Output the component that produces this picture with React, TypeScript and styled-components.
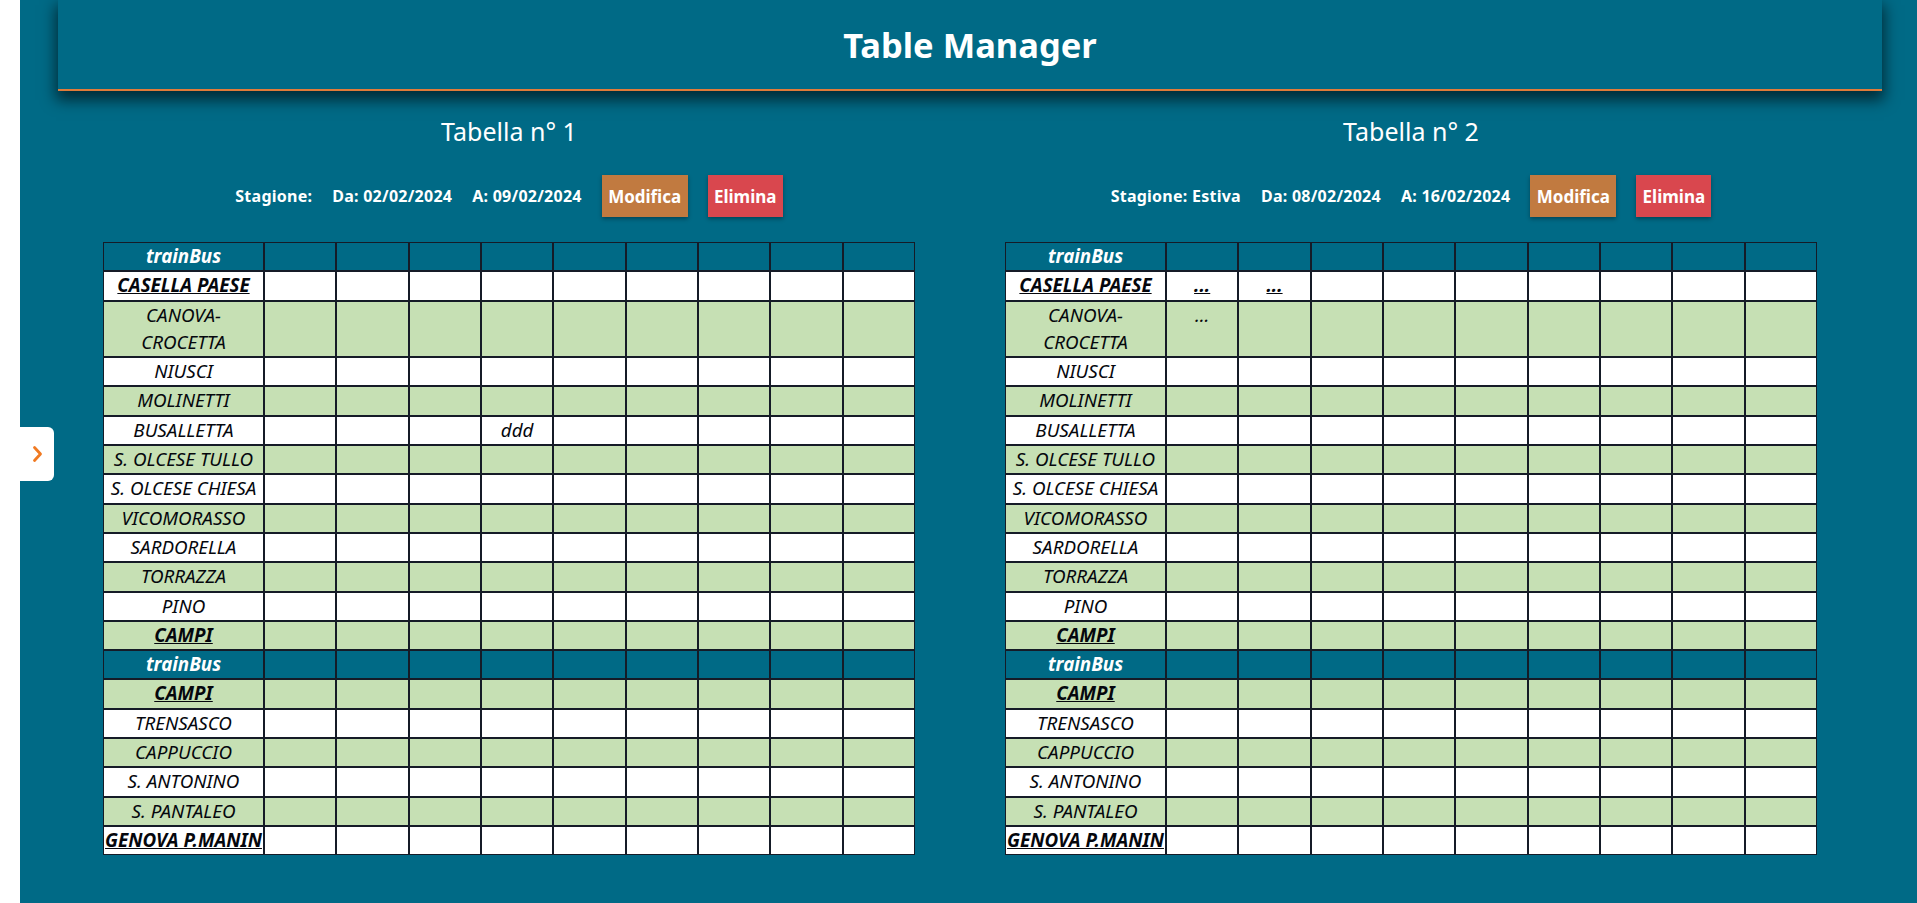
import React from "react";
import styled, { createGlobalStyle, css } from "styled-components";

const TEAL = "#006a86";
const GREEN = "#c6e0b4";
const LINE = "#151b27";

const GlobalStyle = createGlobalStyle`
  html, body {
    margin: 0;
    padding: 0;
    background: ${TEAL};
    font-family: "Noto Sans", "Open Sans", sans-serif;
  }
  * { box-sizing: border-box; }
`;

const Page = styled.div`
  display: flex;
  min-height: 100vh;
  background: ${TEAL};
`;

const Sidebar = styled.aside`
  position: relative;
  flex: 0 0 20px;
  background: #ffffff;
`;

const SidebarToggle = styled.button`
  position: absolute;
  top: 427px;
  left: 19px;
  width: 35px;
  height: 54px;
  padding: 0;
  border: none;
  border-radius: 0 6px 6px 0;
  background: #ffffff;
  display: flex;
  align-items: center;
  justify-content: center;
  cursor: pointer;
  z-index: 2;
`;

const Main = styled.main`
  flex: 1;
  padding: 0 35px 40px 38px;
`;

const Header = styled.header`
  height: 91px;
  border-bottom: 2px solid #e07b39;
  background: ${TEAL};
  box-shadow: 0 7px 14px 2px rgba(0, 0, 0, 0.6);
  display: flex;
  align-items: center;
  justify-content: center;
`;

const Title = styled.h1`
  margin: 0;
  color: #ffffff;
  font-size: 34.5px;
  line-height: 89px;
  font-weight: 700;
`;

const Boards = styled.div`
  display: grid;
  grid-template-columns: repeat(2, 902px);
`;

const Board = styled.section`
  display: flex;
  flex-direction: column;
  align-items: center;
`;

const BoardTitle = styled.h2`
  margin: 23px 0 0;
  color: #ffffff;
  font-size: 25px;
  line-height: 34px;
  font-weight: 400;
`;

const MetaBar = styled.div`
  margin-top: 27px;
  display: flex;
  align-items: center;
  gap: 20px;
  height: 42px;
`;

const MetaItem = styled.span`
  color: #ffffff;
  font-size: 16px;
  letter-spacing: 0.25px;
  font-weight: 700;
  white-space: nowrap;
`;

const ActionButton = styled.button<{ $variant: "edit" | "delete" }>`
  width: ${(p) => (p.$variant === "edit" ? "86px" : "75px")};
  height: 42px;
  padding: 0;
  border: none;
  border-radius: 0;
  color: #ffffff;
  font-family: inherit;
  font-size: 17px;
  font-weight: 700;
  cursor: pointer;
  box-shadow: 0 2px 4px rgba(0, 0, 0, 0.35);
  background: ${(p) => (p.$variant === "edit" ? "#c17a40" : "#d9474e")};
`;

const Timetable = styled.table`
  margin-top: 25px;
  width: 812px;
  border-collapse: separate;
  border-spacing: 0;
  table-layout: fixed;
`;

const StopCol = styled.col`
  width: 161px;
`;

const cellBase = css`
  border: 1px solid ${LINE};
  padding: 0;
  font-size: 18.8px;
  line-height: 27.3px;
  font-style: italic;
  text-align: center;
  vertical-align: top;
  overflow: hidden;
`;

const HeadCell = styled.th`
  ${cellBase};
  background: ${TEAL};
  color: #ffffff;
  font-weight: 700;
`;

const Cell = styled.td<{ $tone: "white" | "green"; $terminal?: boolean }>`
  ${cellBase};
  background: ${(p) => (p.$tone === "green" ? GREEN : "#ffffff")};
  color: #05070d;
  font-weight: ${(p) => (p.$terminal ? 700 : 400)};
  text-decoration: ${(p) => (p.$terminal ? "underline" : "none")};
  white-space: nowrap;
`;

type Stop = {
  name: React.ReactNode;
  tone: "white" | "green";
  terminal?: boolean;
};

const outbound: Stop[] = [
  { name: "CASELLA PAESE", tone: "white", terminal: true },
  {
    name: (
      <>
        CANOVA-
        <br />
        CROCETTA
      </>
    ),
    tone: "green",
  },
  { name: "NIUSCI", tone: "white" },
  { name: "MOLINETTI", tone: "green" },
  { name: "BUSALLETTA", tone: "white" },
  { name: "S. OLCESE TULLO", tone: "green" },
  { name: "S. OLCESE CHIESA", tone: "white" },
  { name: "VICOMORASSO", tone: "green" },
  { name: "SARDORELLA", tone: "white" },
  { name: "TORRAZZA", tone: "green" },
  { name: "PINO", tone: "white" },
  { name: "CAMPI", tone: "green", terminal: true },
];

const inbound: Stop[] = [
  { name: "CAMPI", tone: "green", terminal: true },
  { name: "TRENSASCO", tone: "white" },
  { name: "CAPPUCCIO", tone: "green" },
  { name: "S. ANTONINO", tone: "white" },
  { name: "S. PANTALEO", tone: "green" },
  { name: "GENOVA P.MANIN", tone: "white", terminal: true },
];

const RUNS = 9;

type BoardData = {
  title: string;
  season: string;
  from: string;
  to: string;
  values: Record<string, string>;
};

const boards: BoardData[] = [
  {
    title: "Tabella n° 1",
    season: "",
    from: "02/02/2024",
    to: "09/02/2024",
    values: { "out-4-3": "ddd" },
  },
  {
    title: "Tabella n° 2",
    season: "Estiva",
    from: "08/02/2024",
    to: "16/02/2024",
    values: { "out-0-0": "...", "out-0-1": "...", "out-1-0": "..." },
  },
];

function HeadRow() {
  return (
    <tr>
      <HeadCell>trainBus</HeadCell>
      {Array.from({ length: RUNS }, (_, i) => (
        <HeadCell key={i} />
      ))}
    </tr>
  );
}

function StopRows({
  stops,
  prefix,
  values,
}: {
  stops: Stop[];
  prefix: string;
  values: Record<string, string>;
}) {
  return (
    <>
      {stops.map((stop, r) => (
        <tr key={r}>
          <Cell $tone={stop.tone} $terminal={stop.terminal}>
            {stop.name}
          </Cell>
          {Array.from({ length: RUNS }, (_, c) => (
            <Cell key={c} $tone={stop.tone} $terminal={stop.terminal}>
              {values[`${prefix}-${r}-${c}`] ?? ""}
            </Cell>
          ))}
        </tr>
      ))}
    </>
  );
}

function ChevronRight() {
  return (
    <svg width="12" height="18" viewBox="0 0 12 18" fill="none">
      <polyline
        points="3.5,2.5 9.5,9 3.5,15.5"
        stroke="#f07a22"
        strokeWidth="2.8"
        strokeLinecap="round"
        strokeLinejoin="round"
      />
    </svg>
  );
}

export default function App() {
  return (
    <>
      <GlobalStyle />
      <Page>
        <Sidebar>
          <SidebarToggle aria-label="Apri menu">
            <ChevronRight />
          </SidebarToggle>
        </Sidebar>
        <Main>
          <Header>
            <Title>Table Manager</Title>
          </Header>
          <Boards>
            {boards.map((b) => (
              <Board key={b.title}>
                <BoardTitle>{b.title}</BoardTitle>
                <MetaBar>
                  <MetaItem>Stagione: {b.season}</MetaItem>
                  <MetaItem>Da: {b.from}</MetaItem>
                  <MetaItem>A: {b.to}</MetaItem>
                  <ActionButton $variant="edit">Modifica</ActionButton>
                  <ActionButton $variant="delete">Elimina</ActionButton>
                </MetaBar>
                <Timetable>
                  <colgroup>
                    <StopCol />
                    {Array.from({ length: RUNS }, (_, i) => (
                      <col key={i} />
                    ))}
                  </colgroup>
                  <tbody>
                    <HeadRow />
                    <StopRows stops={outbound} prefix="out" values={b.values} />
                    <HeadRow />
                    <StopRows stops={inbound} prefix="in" values={b.values} />
                  </tbody>
                </Timetable>
              </Board>
            ))}
          </Boards>
        </Main>
      </Page>
    </>
  );
}
